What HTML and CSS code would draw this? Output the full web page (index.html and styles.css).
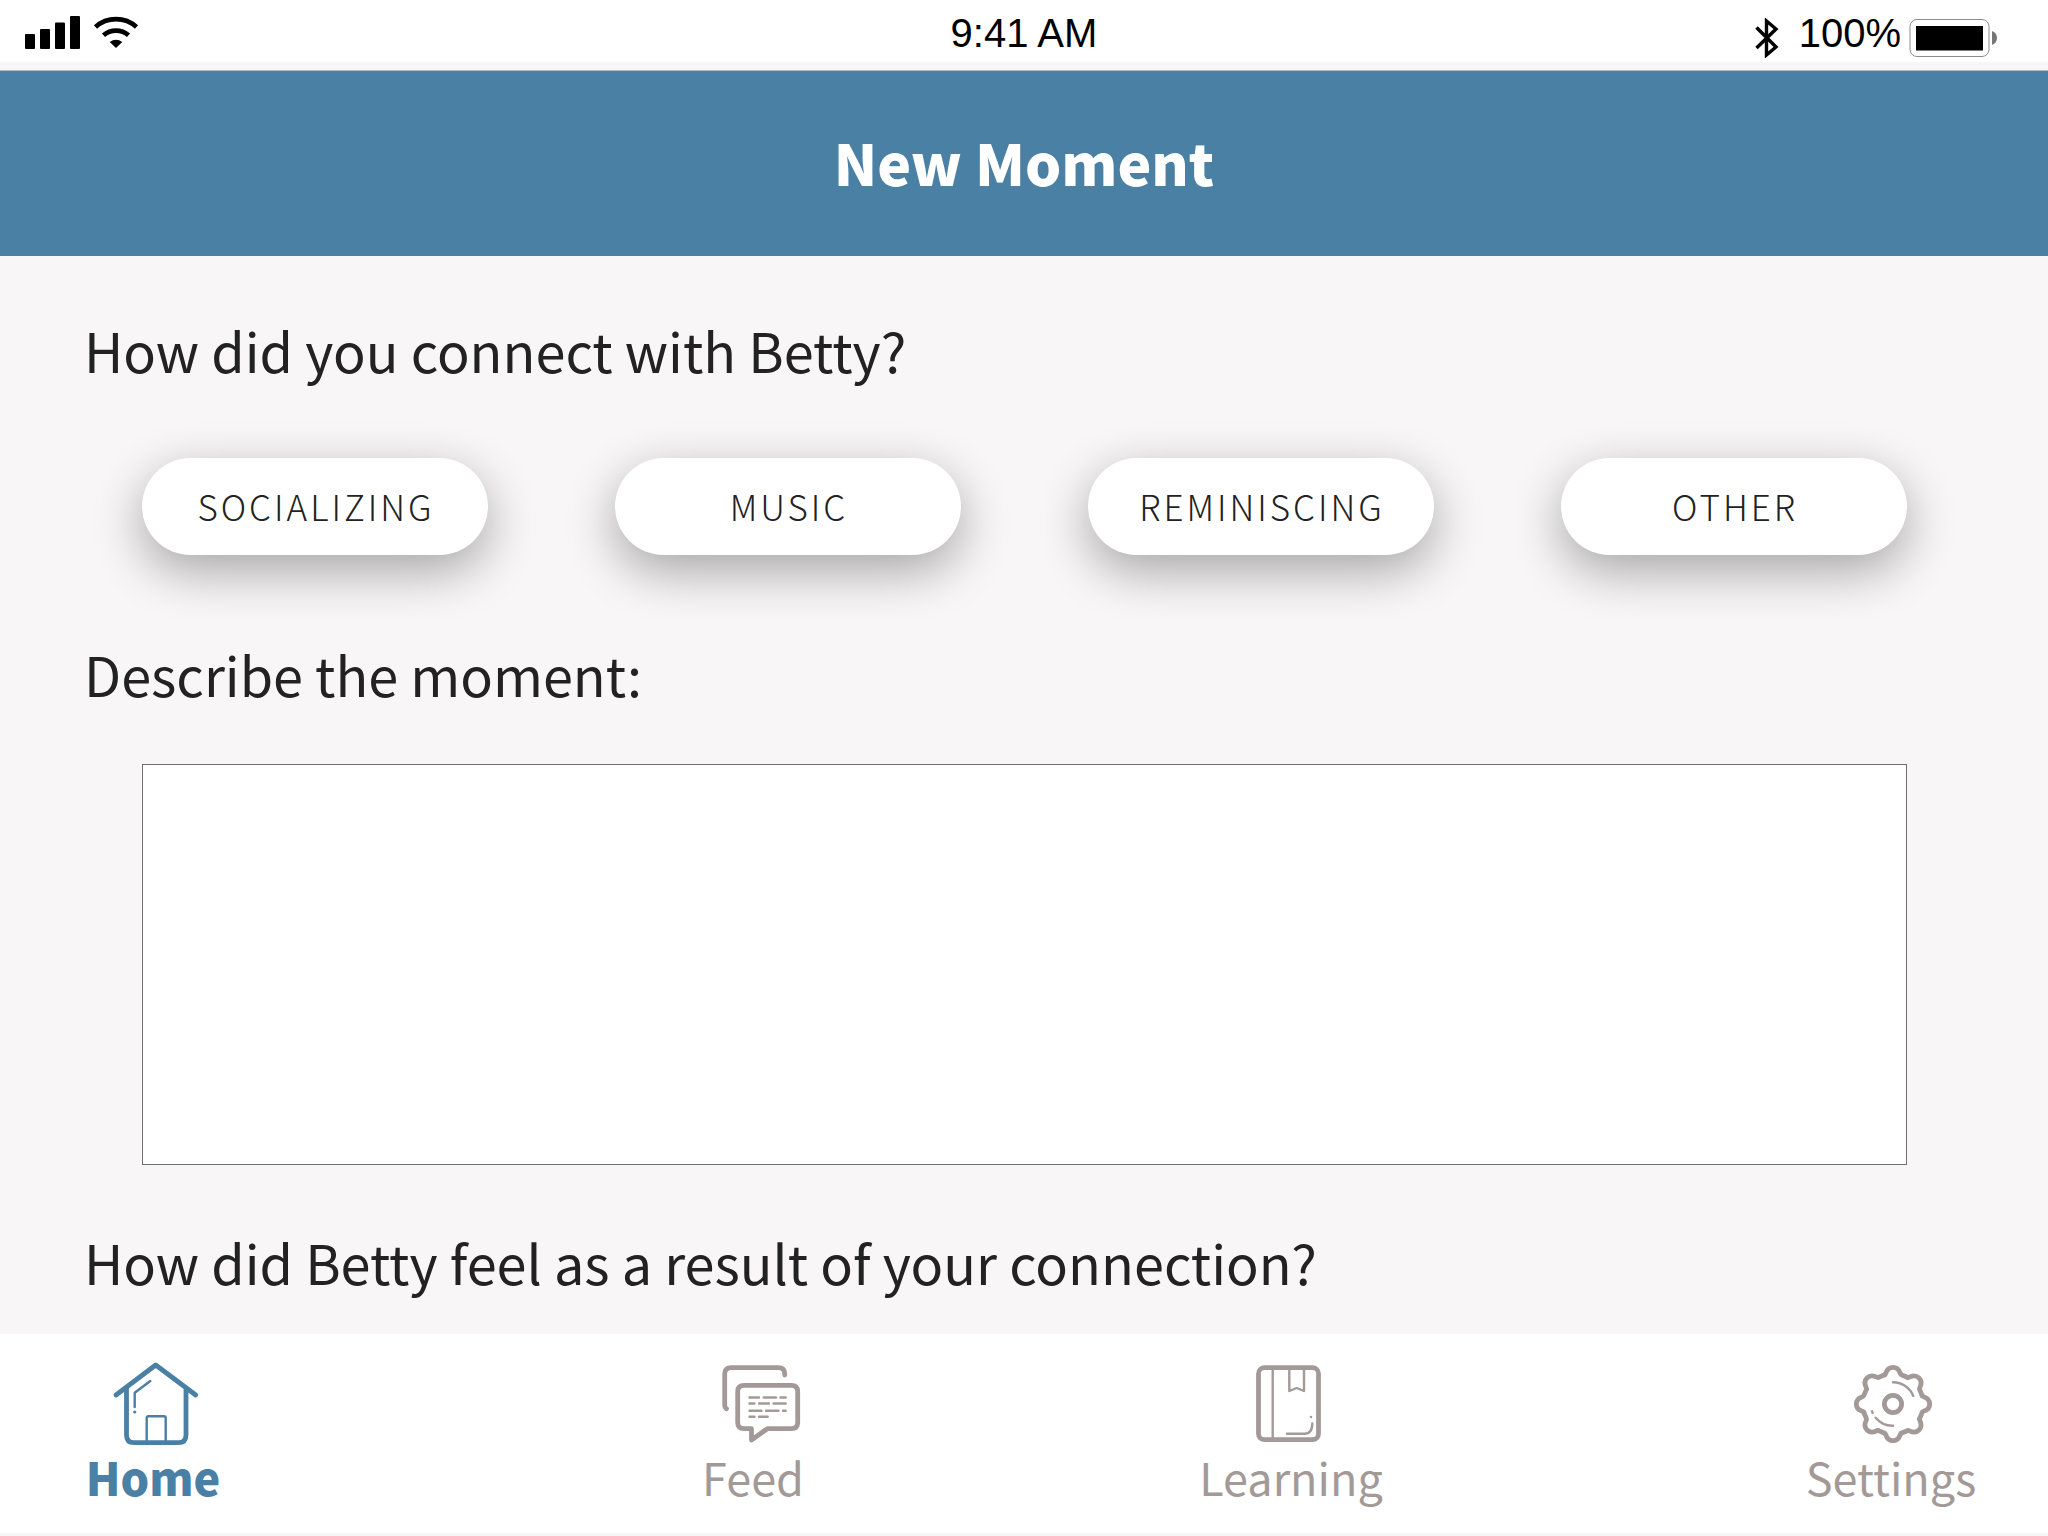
FILE: index.html
```html
<!DOCTYPE html>
<html lang="en">
<head>
<meta charset="utf-8">
<meta name="viewport" content="width=device-width, initial-scale=1">
<title>New Moment</title>
<link rel="stylesheet" href="styles.css">
</head>
<body>
<div class="status">
  <div class="status-left">
    <svg width="56" height="34" viewBox="0 0 56 34" role="img" aria-label="Signal strength"><rect y="18" width="10" height="15" rx="1"/><rect x="15" y="13" width="10" height="20" rx="1"/><rect x="30" y="6.500" width="10" height="26.500" rx="1"/><rect x="45" width="10" height="33" rx="1"/></svg>
    <svg width="46" height="34" viewBox="0 0 46 34" role="img" aria-label="Wi-Fi"><path d="M2.500 11C14 .5 32 .5 43.500 11M10.500 19.300C17.500 13 28.500 13 35.500 19.300" fill="none" stroke="#000" stroke-width="4.600"/><path d="M16.800 26Q23 21.500 29.200 26L23 32Z"/></svg>
  </div>
  <div class="status-time">9:41 AM</div>
  <div class="status-right">
    <svg width="24" height="40" viewBox="0 0 24 40" role="img" aria-label="Bluetooth"><path d="M1.500 9.500 21 29 11.500 37V3L21 11 1.500 30" fill="none" stroke="#000" stroke-width="3.400"/></svg>
    <span class="status-level">100%</span>
    <svg width="90" height="40" viewBox="0 0 90 40" role="img" aria-label="Battery full"><rect x="1" y="1.500" width="79" height="37" rx="7" fill="#fff" stroke="#8c8c8c"/><rect x="7" y="8" width="67" height="24.500"/><path d="M83 13Q88 15 88 20T83 27Z" fill="#777"/></svg>
  </div>
</div>
<header class="header"><h1 class="title">New Moment</h1></header>
<main class="main">
  <section class="question">
    <h2 class="prompt">How did you connect with Betty?</h2>
    <div class="choices">
      <button class="choice" type="button">SOCIALIZING</button>
      <button class="choice" type="button">MUSIC</button>
      <button class="choice" type="button">REMINISCING</button>
      <button class="choice" type="button">OTHER</button>
    </div>
  </section>
  <section class="question">
    <label class="prompt" for="moment">Describe the moment:</label>
    <textarea class="notes" id="moment"></textarea>
  </section>
  <section class="question">
    <h2 class="prompt">How did Betty feel as a result of your connection?</h2>
  </section>
</main>
<nav class="tabs">
  <a class="tab tab-wide tab-active" href="#home" aria-current="page">
    <svg class="icon" viewBox="0 0 96 96" aria-hidden="true"><path class="thick" d="M11 39 50.700 9 90.700 39M21.500 32V79Q21.500 86.700 29 86.700H73.500Q81 86.700 81 79V32"/><path class="thin" d="M41.700 86V62Q41.700 60.300 43.500 60.300H59Q60.700 60.300 60.700 62V86M45.300 25 29.700 36.700V51"/><circle class="dot" cx="29.700" cy="56" r="1.600"/></svg>
    <span>Home</span>
  </a>
  <a class="tab" href="#feed">
    <svg class="icon" viewBox="0 0 96 96" aria-hidden="true"><g transform="translate(2 0)"><path class="thick" d="M19.500 52.700Q17.700 51.500 17.700 49V18Q17.700 11.700 24 11.700H71.500Q77.700 11.700 77.700 18V19M37 29.300H84.500Q90.700 29.300 90.700 35.500V66.500Q90.700 72.700 84.500 72.700H60.300L44.500 84V72.700H37Q30.700 72.700 30.700 66.500V35.500Q30.700 29.300 37 29.300Z"/><path class="thin" d="M42.500 41.500H52M56.700 41.500H69M73.500 41.500H78.700M42.500 47.500H47.500M52 47.500H62M66.500 47.500H78.700M42.500 54.700H54.500M59 54.700H71.500M76 54.700H78.700M42.500 60.700H47.500M52 60.700H60.700"/></g></svg>
    <span>Feed</span>
  </a>
  <a class="tab" href="#learning">
    <svg class="icon" viewBox="0 0 96 96" aria-hidden="true"><rect class="thick" x="15.500" y="11.700" width="60" height="72" rx="6"/><path class="thin" d="M29.700 12V83M46.300 12V35L53.700 32 61 35V12M44 77.700H61.500Q69.300 77.700 69.300 67.500"/><circle class="dot" cx="68" cy="61" r="1.300"/></svg>
    <span>Learning</span>
  </a>
  <a class="tab tab-wide" href="#settings">
    <svg class="icon" viewBox="0 0 96 96" aria-hidden="true"><g transform="translate(50 48)"><path class="thick" id="tooth" d="M-8.300 -29.200C-6.500 -29.500 -7.600 -36.700 0 -36.700S6.500 -29.500 8.300 -29.200L14.800 -26.500"/><use href="#tooth" transform="rotate(45)"/><use href="#tooth" transform="rotate(90)"/><use href="#tooth" transform="rotate(135)"/><use href="#tooth" transform="rotate(180)"/><use href="#tooth" transform="rotate(225)"/><use href="#tooth" transform="rotate(270)"/><use href="#tooth" transform="rotate(315)"/><circle class="thick" r="8.600"/><path class="thin" d="M0 -21.700A21.700 21.700 0 0 1 20.300 -8M0 21.700A21.700 21.700 0 0 1 -17.300 13.700M-21 7.300-20.300 9"/></g></svg>
    <span>Settings</span>
  </a>
</nav>
</body>
</html>
```
FILE: styles.css
```css
* { box-sizing: border-box; }

body {
  display: flex;
  flex-direction: column;
  min-height: 100vh;
  margin: 0;
  padding-bottom: 3px;
  background: #f8f6f7;
  color: #222;
  font-family: "Noto Sans CJK SC", "Noto Sans", sans-serif;
}

.status {
  display: grid;
  grid-template-columns: 1fr auto 1fr;
  height: 62px;
  padding: 0 25px;
  background: #fff;
  color: #000;
  font: 40px/66px "Liberation Sans", Arial, sans-serif;
}

.status-left,
.status-right {
  display: flex;
  align-items: flex-start;
}

.status-left { gap: 12px; padding-top: 16px; }
.status-right { justify-content: flex-end; gap: 8px; padding-right: 24px; }
.status-right svg { margin-top: 18px; }
.status-level { padding-left: 12px; }

.header {
  margin-top: 8px;
  padding: 54px 24px 59px;
  border-top: 1px solid #a9bfcc;
  background: #4a80a4;
  color: #fff;
  text-align: center;
}

.title {
  margin: 0;
  font-size: 57px;
  font-weight: 900;
  line-height: 72px;
}

.main {
  flex: 1;
  padding: 62px 141px 32px 142px;
}

.question { margin-bottom: 65px; }
.question:first-child { margin-bottom: 87px; }
.question:last-child { margin-bottom: 0; }

.prompt {
  display: block;
  margin: 0 0 58px -58px;
  font-size: 54px;
  font-weight: 400;
  line-height: 64px;
}

.question:last-child .prompt { margin-bottom: 0; }

.choices {
  display: grid;
  grid-template-columns: repeat(4, 1fr);
  gap: 127px;
  padding-top: 18px;
}

.choice {
  height: 97px;
  padding: 0 0 2px 2px;
  border: 0;
  border-radius: 49px;
  background: #fff;
  box-shadow: 0 16px 50px rgba(0, 0, 0, .33);
  color: #222;
  font-family: inherit;
  font-size: 35px;
  font-weight: 300;
  letter-spacing: 3px;
}

.notes {
  display: block;
  width: 100%;
  height: 401px;
  padding: 24px;
  border: 1px solid #707070;
  border-radius: 0;
  background: #fff;
  font: inherit;
  font-size: 34px;
  resize: none;
}

.tabs {
  display: flex;
  justify-content: space-between;
  padding: 21px 4px 31px 0;
  border-top: 1px solid #fff;
  background: #fff;
}

.tab {
  display: flex;
  flex-direction: column;
  align-items: center;
  width: 182px;
  color: #a39a98;
  font-size: 45px;
  line-height: 50px;
  text-decoration: none;
}

.tab-wide { width: 306px; }

.tab-active {
  color: #4a80a4;
  font-weight: 900;
}

.icon {
  width: 96px;
  height: 96px;
  fill: none;
  stroke: currentColor;
  stroke-linecap: round;
  stroke-linejoin: round;
}

.thick { stroke-width: 4.8; }
.thin { stroke-width: 2.4; }
.dot { fill: currentColor; stroke: none; }
```
